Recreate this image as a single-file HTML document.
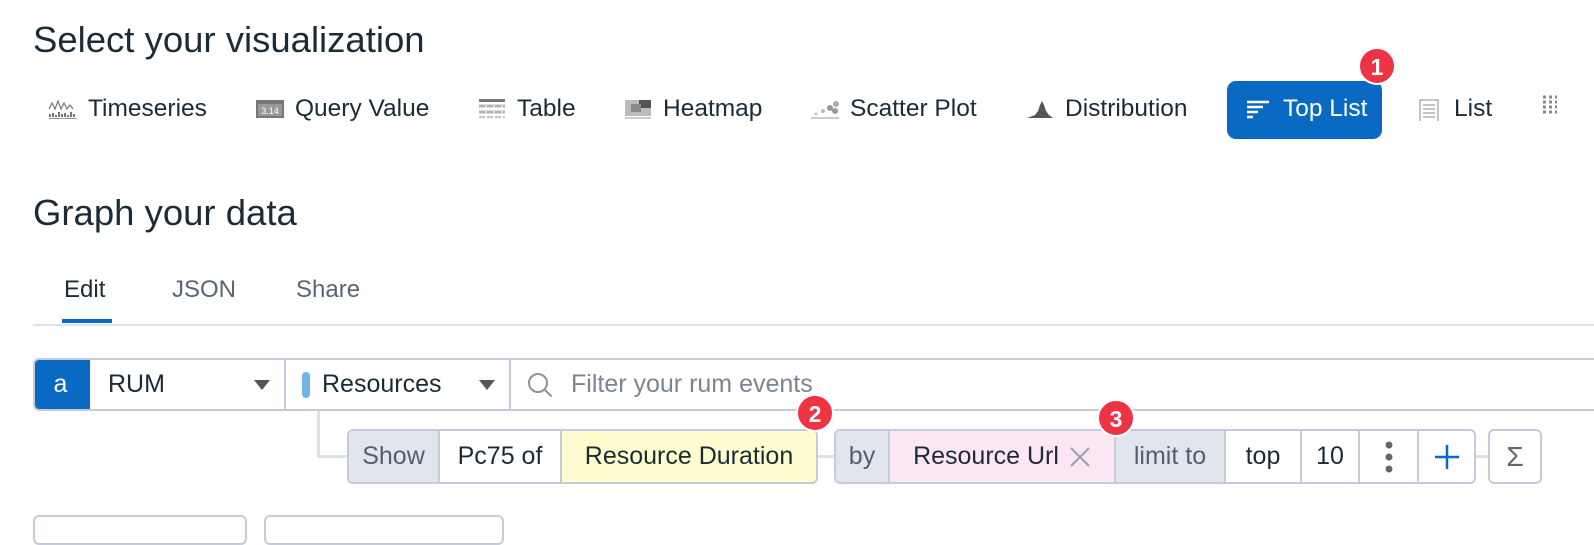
<!DOCTYPE html>
<html><head><style>
*{margin:0;padding:0;box-sizing:border-box}
body{width:1594px;height:528px;background:#fff;font-family:"Liberation Sans",sans-serif;color:#1c2b36;position:relative;overflow:hidden}
.a{position:absolute;white-space:nowrap}
h1{position:absolute;font-weight:normal;font-size:36.5px;color:#1c2b36;left:33px}
.vi{position:absolute;top:95px;font-size:24.5px;color:#1c2b36;display:flex;align-items:center;gap:10px;white-space:nowrap}
.ic{display:inline-block;width:30px;height:20px}
.badge{position:absolute;width:38px;height:38px;border-radius:50%;background:#ee3344;color:#fff;font-weight:bold;font-size:23px;text-align:center;line-height:36px;border:2px solid #fff}
.box{position:absolute;border:2px solid #c5cbdb;border-radius:6px;display:flex;overflow:hidden;background:#fff}
.c{height:100%;display:flex;align-items:center;justify-content:center;font-size:25px;border-right:2px solid #c5cbdb;white-space:nowrap}
.c:last-child{border-right:none}
.g{background:#e1e5ee;color:#545f6c}
</style></head><body>
<h1 style="top:19px">Select your visualization</h1>
<div class="vi" style="left:48px"><svg class="ic" viewBox="0 0 30 20"><path d="M1 10l3-6 3 6 3-8 3 8 3-6 3 6 3-4 3 4" fill="none" stroke="#777" stroke-width="1.2"/><path d="M2 18v-3M5 18v-4M8 18v-2M11 18v-5M14 18v-3M17 18v-4M20 18v-2M23 18v-5M26 18v-3" stroke="#777" stroke-width="2"/><path d="M1 19.5h28" stroke="#999"/></svg>Timeseries</div>
<div class="vi" style="left:255px"><svg class="ic" viewBox="0 0 30 20"><rect x="1" y="1" width="28" height="18" fill="#777"/><rect x="3" y="5" width="24" height="12" fill="#999"/><text x="15" y="15" font-size="9" fill="#fff" text-anchor="middle" font-family="Liberation Sans">3.14</text></svg>Query Value</div>
<div class="vi" style="left:477px"><svg class="ic" viewBox="0 0 30 20"><rect x="2" y="0" width="26" height="3" fill="#777"/><rect x="2" y="5" width="26" height="4" fill="#ddd"/><rect x="2" y="11" width="26" height="4" fill="#ddd"/><path d="M2 7h26M2 13h26M2 18h26" stroke="#888" stroke-dasharray="6 2"/></svg>Table</div>
<div class="vi" style="left:623px"><svg class="ic" viewBox="0 0 30 20"><rect x="2" y="1" width="26" height="16" fill="#bbb"/><rect x="16" y="1" width="12" height="8" fill="#555"/><rect x="8" y="5" width="10" height="8" fill="#888"/><path d="M2 19h26" stroke="#999"/></svg>Heatmap</div>
<div class="vi" style="left:810px"><svg class="ic" viewBox="0 0 30 20"><circle cx="26" cy="5" r="3" fill="#aaa"/><circle cx="20" cy="9" r="3" fill="#999"/><circle cx="25" cy="12" r="3" fill="#999"/><circle cx="13" cy="12" r="2" fill="#bbb"/><circle cx="6" cy="15" r="1.5" fill="#bbb"/><path d="M1 19h28" stroke="#999"/></svg>Scatter Plot</div>
<div class="vi" style="left:1025px"><svg class="ic" viewBox="0 0 30 20"><path d="M2 19h26l-4-3-3-4-2-6-2-4-2 4-2 6-3 4z" fill="#555"/></svg>Distribution</div>
<div class="a" style="left:1227px;top:81px;width:155px;height:58px;background:#0a69c2;border-radius:9px"></div>
<div class="vi" style="left:1243px;color:#fff"><svg class="ic" viewBox="0 0 30 20"><path d="M4 3h22M4 8h16M4 13h11M4 18h6" stroke="#fff" stroke-width="2.5"/></svg>Top List</div>
<div class="badge" style="left:1358px;top:47px">1</div>
<div class="vi" style="left:1414px"><svg class="ic" viewBox="0 0 30 20" style="height:24px"><rect x="6" y="1" width="18" height="22" fill="#fff" stroke="#888"/><path d="M9 6h12M9 10h12M9 14h12M9 18h12" stroke="#888"/></svg>List</div>
<div class="vi" style="left:1540px"><svg class="ic" viewBox="0 0 30 20"><path d="M3 2h14M3 7h14M3 12h14M3 17h14" stroke="#888" stroke-width="3" stroke-dasharray="3 3"/></svg></div>

<h1 style="top:192px">Graph your data</h1>
<div class="a" style="left:64px;top:276px;font-size:24px">Edit</div>
<div class="a" style="left:172px;top:276px;font-size:24px;color:#5a6572">JSON</div>
<div class="a" style="left:296px;top:276px;font-size:24px;color:#5a6572">Share</div>
<div class="a" style="left:62px;top:319px;width:50px;height:4px;background:#0a69c2"></div>
<div class="a" style="left:33px;top:324px;width:1561px;height:2px;background:#dde1ea"></div>

<div class="box" style="left:33px;top:358px;width:1580px;height:53px;border-radius:6px 0 0 6px">
<div class="c" style="width:57px;background:#0a69c2;color:#fff;border-right-color:#0a69c2;margin:-2px 0 -2px -2px;height:53px">a</div>
<div class="c" style="width:196px;justify-content:space-between;padding:0 14px 0 18px">RUM<svg width="16" height="10"><path d="M0 0h16l-8 10z" fill="#555"/></svg></div>
<div class="c" style="width:225px;justify-content:space-between;padding:0 14px 0 16px"><span style="display:flex;align-items:center;gap:12px"><span style="width:8px;height:26px;border-radius:4px;background:#6fb6e6"></span>Resources</span><svg width="16" height="10"><path d="M0 0h16l-8 10z" fill="#555"/></svg></div>
<div class="c" style="flex:1;justify-content:flex-start;padding-left:16px;color:#7b8591;gap:18px"><svg width="26" height="26"><circle cx="11" cy="11" r="9" fill="none" stroke="#8a939e" stroke-width="2"/><path d="M17.5 17.5l7 7" stroke="#8a939e" stroke-width="2"/></svg>Filter your rum events</div>
</div>
<div class="a" style="left:317px;top:411px;width:3px;height:47px;background:#dde1ea"></div>
<div class="a" style="left:317px;top:455px;width:32px;height:3px;background:#dde1ea"></div>
<div class="box" style="left:347px;top:429px;width:471px;height:55px">
<div class="c g" style="width:91px">Show</div>
<div class="c" style="width:122px">Pc75 of</div>
<div class="c" style="flex:1;background:#fffdd0">Resource Duration</div>
</div>
<div class="a" style="left:818px;top:455px;width:17px;height:3px;background:#dde1ea"></div>
<div class="box" style="left:834px;top:429px;width:642px;height:55px">
<div class="c g" style="width:54px">by</div>
<div class="c" style="width:226px;background:#fde6f3;gap:10px">Resource Url<svg width="22" height="22"><path d="M2 2l18 18M20 2L2 20" stroke="#9aa1ab" stroke-width="2"/></svg></div>
<div class="c g" style="width:110px">limit to</div>
<div class="c" style="width:76px">top</div>
<div class="c" style="width:58px">10</div>
<div class="c" style="width:59px"><svg width="10" height="32"><circle cx="5" cy="4" r="3.5" fill="#666"/><circle cx="5" cy="16" r="3.5" fill="#666"/><circle cx="5" cy="28" r="3.5" fill="#666"/></svg></div>
<div class="c" style="flex:1"><svg width="26" height="26"><path d="M13 1v24M1 13h24" stroke="#0a69c2" stroke-width="2.5"/></svg></div>
</div>
<div class="a" style="left:1476px;top:455px;width:13px;height:3px;background:#dde1ea"></div>
<div class="box" style="left:1488px;top:429px;width:54px;height:55px;justify-content:center;align-items:center;font-size:28px;color:#666">Σ</div>
<div class="badge" style="left:796px;top:394px">2</div>
<div class="badge" style="left:1097px;top:399px">3</div>
<div class="a" style="left:33px;top:515px;width:214px;height:30px;border:2px solid #c5cbdb;border-radius:6px"></div>
<div class="a" style="left:264px;top:515px;width:240px;height:30px;border:2px solid #c5cbdb;border-radius:6px"></div>
</body></html>
